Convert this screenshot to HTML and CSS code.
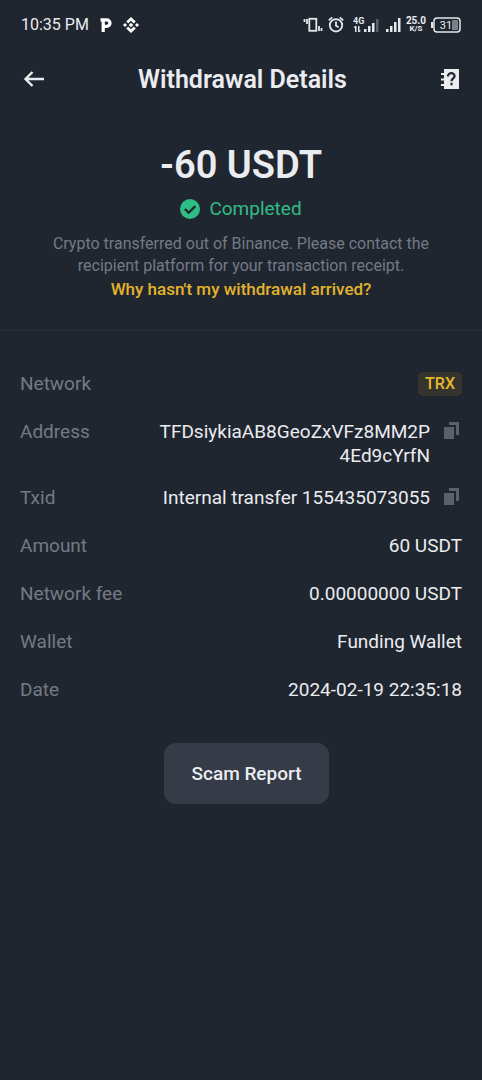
FILE: index.html
```
<!DOCTYPE html>
<html lang="en">
<head>
<meta charset="utf-8">
<meta name="viewport" content="width=device-width, initial-scale=1">
<title>Withdrawal Details</title>
<link rel="stylesheet" href="styles.css">
</head>
<body>
<div class="status">
  <div class="status-left">
    <time>10:35 PM</time>
    <svg width="12" height="14" viewBox="0 0 12 14" fill="none" stroke="#fff" stroke-width="3.200"><path d="M3.200 14V1.800H6.700a2.900 2.900 0 0 1 0 6.600H3.200M0.500 1.800h3"/></svg>
    <svg width="16" height="16" viewBox="0 0 16 16" fill="#fff"><path d="M8 0l4.800 4.400-2 2L8 3.800 5.200 6.400l-2-2zM8 16l4.800-4.400-2-2L8 12.200 5.200 9.600l-2 2zM8 5.800L10.200 8 8 10.200 5.800 8zM2 6l2 2-2 2-2-2zM14 6l2 2-2 2-2-2z"/></svg>
  </div>
  <div class="status-right">
    <svg class="vibrate" width="20" height="16" viewBox="0 0 20 16" fill="none" stroke="#e4e7ec" stroke-width="1.800"><rect x="6.300" y="1.800" width="7" height="12"/><path d="M1.500 2v3M4 2v5M16 9v5M18.500 11v3"/></svg>
    <svg class="alarm" width="16" height="17" viewBox="0 0 16 17" fill="none" stroke="#e4e7ec" stroke-width="1.800"><circle cx="8" cy="9.300" r="6.200"/><path d="M8 5.500v4.200l2.700 1.600M.8 4.300l3.400-3M15.200 4.300l-3.400-3"/></svg>
    <svg class="signal" width="26" height="17" viewBox="0 0 26 17" fill="#e4e7ec"><text x="0" y="8" class="tiny">4G</text><path d="M2 10h1.500v6H2zM.5 11.500L2 10v2zM5 10h1.500v6H5zM6.500 16L8 14.500H6.500zM11 13h2.500v3H11zM15 10h2.500v6H15zM19 7h2.500v9H19z"/><path d="M23 3h2.500v13H23z" opacity=".3"/></svg>
    <svg class="bars" width="15" height="15" viewBox="0 0 15 15" fill="#e4e7ec"><path d="M0 12h2.500v3H0zM4 9h2.500v6H4zM8 5h2.500v10H8zM12 1h2.500v14H12z"/></svg>
    <div class="speed"><span>25.0</span><span>K/S</span></div>
    <svg class="battery" width="30" height="16" viewBox="0 0 30 16"><rect x="3" y="1" width="26" height="14" rx="3" fill="none" stroke="#e4e7ec" stroke-width="1.500"/><path d="M1 5v6" stroke="#e4e7ec" stroke-width="2"/><path d="M21 3h6v10h-6z" fill="#7b818a"/><text x="15" y="12" text-anchor="middle" class="charge">31</text></svg>
  </div>
</div>
<header class="bar">
  <button class="icon-button" aria-label="Back"><svg width="22" height="18" viewBox="0 0 22 18" fill="none" stroke="#eaecef" stroke-width="2.400"><path d="M21 9H3M9.500 2L2.500 9l7 7"/></svg></button>
  <h1>Withdrawal Details</h1>
  <button class="icon-button" aria-label="Help"><svg width="19" height="20" viewBox="0 0 19 20"><path d="M4 0h15v20H4v-3H1v-2h3v-3.500H1v-2h3V6H1V4h3z" fill="#eaecef"/><path d="M8 7.500V7a3.300 2.800 0 0 1 6.600 0c0 2.500-3.100 2.400-3.100 5.200M11.500 13.800v2.400" fill="none" stroke="#202630" stroke-width="2.200"/></svg></button>
</header>
<main>
  <section class="summary">
    <p class="amount">-60 USDT</p>
    <p class="state"><svg width="20" height="20" viewBox="0 0 20 20"><circle cx="10" cy="10" r="10" fill="#2ebd85"/><path d="M5 10l3.700 3.700 6.600-6.600" fill="none" stroke="#202630" stroke-width="2.300"/></svg>Completed</p>
    <p class="note">Crypto transferred out of Binance. Please contact the recipient platform for your transaction receipt.</p>
    <a class="why" href="#">Why hasn't my withdrawal arrived?</a>
  </section>
  <dl class="details">
    <div class="row"><dt>Network</dt><dd><span class="tag">TRX</span></dd></div>
    <div class="row row-wrap"><dt>Address</dt><dd><span class="address">TFDsiykiaAB8GeoZxVFz8MM2P<wbr>4Ed9cYrfN</span><button class="copy" aria-label="Copy address"><svg width="15" height="17" viewBox="0 0 15 17" fill="#5a616b"><path d="M0 5h10v12H0zM5 0h10v13h-3V3H5z"/></svg></button></dd></div>
    <div class="row"><dt>Txid</dt><dd><span>Internal transfer 155435073055</span><button class="copy" aria-label="Copy Txid"><svg width="15" height="17" viewBox="0 0 15 17" fill="#5a616b"><path d="M0 5h10v12H0zM5 0h10v13h-3V3H5z"/></svg></button></dd></div>
    <div class="row"><dt>Amount</dt><dd>60 USDT</dd></div>
    <div class="row"><dt>Network fee</dt><dd>0.00000000 USDT</dd></div>
    <div class="row"><dt>Wallet</dt><dd>Funding Wallet</dd></div>
    <div class="row"><dt>Date</dt><dd>2024-02-19 22:35:18</dd></div>
  </dl>
  <div class="actions"><button class="report">Scam Report</button></div>
</main>
</body>
</html>
```

FILE: styles.css
```
* { box-sizing: border-box; }
body {
  margin: 0;
  min-height: 100vh;
  background: #202630;
  color: #eaecef;
  font-family: Roboto, "Liberation Sans", sans-serif;
  font-size: 19px;
  line-height: 24px;
}
h1, p, dl, dd { margin: 0; }
svg { display: block; flex: none; }
button { border: 0; padding: 0; background: none; color: inherit; font: inherit; cursor: pointer; }
.status { display: flex; justify-content: space-between; align-items: center; height: 49px; padding: 0 21px; }
.status-left { display: flex; align-items: center; gap: 11px; font-size: 16px; }
.status-right { display: flex; align-items: center; gap: 5px; }
.signal { margin-left: 4px; }
.bars { margin-left: 2px; }
.tiny { font-size: 9px; font-weight: 700; }
.charge { font-size: 11px; fill: #eaecef; }
.speed { display: flex; flex-direction: column; align-items: center; font-size: 10px; font-weight: 700; line-height: 8px; }
.speed span + span { font-size: 8px; }
.bar { display: flex; justify-content: space-between; align-items: center; height: 59px; padding: 0 23px; }
h1 { font-size: 25px; line-height: 32px; font-weight: 600; padding-top: 3px; }
.summary { display: flex; flex-direction: column; align-items: center; padding: 35px 44px 30px; text-align: center; border-bottom: 1px solid #2b313a; }
.amount { font-size: 38px; line-height: 44px; font-weight: 600; }
.state { display: flex; align-items: center; gap: 9px; margin-top: 10px; color: #2ebd85; }
.note { margin-top: 12px; color: #747a84; font-size: 16px; line-height: 22px; }
.why { margin-top: 1px; color: #e2b32b; font-size: 17px; line-height: 22px; font-weight: 500; text-decoration: none; }
.details { padding: 29px 20px 0; }
.row { display: flex; justify-content: space-between; gap: 16px; padding: 12px 0; }
.row-wrap { padding-bottom: 6px; }
dt { color: #747a84; flex: none; }
dd { display: flex; align-items: flex-start; justify-content: flex-end; gap: 14px; text-align: right; }
.tag { padding: 0 7px; border-radius: 5px; background: #34332e; color: #e8b82c; font-size: 16px; font-weight: 500; line-height: 24px; }
.copy { padding: 2px 3px 0 0; }
.actions { display: flex; justify-content: center; padding: 29px 20px 29px 31px; }
.report { padding: 18px 27px; border-radius: 12px; background: #353b47; font-weight: 500; line-height: 25px; }
```
